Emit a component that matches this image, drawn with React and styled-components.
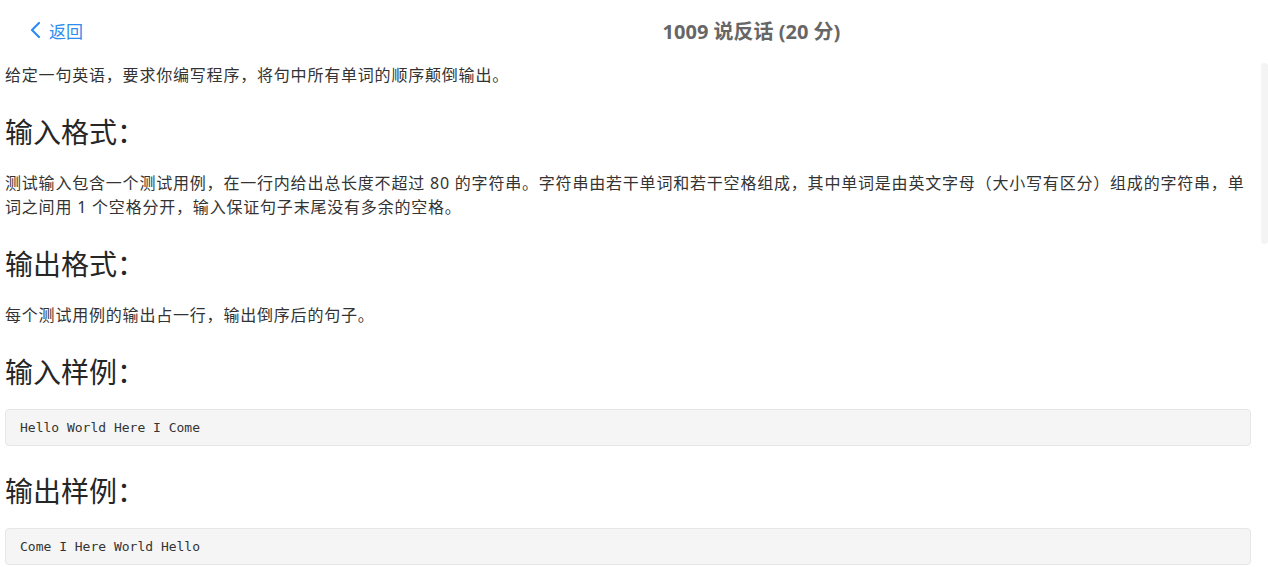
import styled, { createGlobalStyle } from 'styled-components';

const GlobalStyle = createGlobalStyle`
  body {
    margin: 0;
    background: #fff;
    font-family: "Noto Sans", "Noto Sans CJK SC", sans-serif;
    color: #333;
  }
`;

const Page = styled.div`
  width: 1268px;
  height: 579px;
  overflow: hidden;
`;

const Header = styled.header`
  display: flex;
  align-items: center;
  box-sizing: border-box;
  height: 63px;
  padding-bottom: 3px;
`;

const BackLink = styled.a`
  display: flex;
  align-items: center;
  gap: 6px;
  width: 206px;
  padding-left: 29px;
  color: #2d8cf0;
  font-size: 17px;
  font-family: "Noto Sans CJK SC", sans-serif;
  text-decoration: none;
  cursor: pointer;
`;

const Title = styled.h1`
  flex: 1;
  margin: 0;
  text-align: center;
  font-size: 20px;
  font-weight: 700;
  color: #666;
`;

const Content = styled.main`
  position: relative;
  display: flex;
  flex-direction: column;
  padding: 0 17px 0 5px;
`;

const ScrollThumb = styled.div`
  position: absolute;
  top: 0;
  right: 0;
  width: 7px;
  height: 181px;
  border-radius: 4px;
  background: #f4f4f4;
`;

const Para = styled.p`
  margin: ${p => (p.$first ? '0' : '2px 0 0')};
  font-size: 16px;
  line-height: 24px;
  letter-spacing: 0.8px;
  color: #333;
`;

const Heading = styled.h2`
  margin: 26px 0 20px;
  font-size: 28px;
  font-weight: 400;
  line-height: 36px;
  color: #262626;
  font-family: "Noto Sans CJK SC", sans-serif;
`;

const Code = styled.pre`
  margin: 0;
  padding: 8px 14px;
  background: #f5f5f5;
  border: 1px solid #e6e6e6;
  border-radius: 4px;
  font-family: "DejaVu Sans Mono", "Liberation Mono", monospace;
  font-size: 13px;
  line-height: 19px;
  color: #333;
`;

function ChevronLeft() {
  return (
    <svg width="14" height="18" viewBox="0 0 14 18" fill="none">
      <path d="M10 2 L3 9 L10 16" stroke="#2d8cf0" strokeWidth="2.2" strokeLinecap="round" strokeLinejoin="round" />
    </svg>
  );
}

export default function App() {
  return (
    <Page>
      <GlobalStyle />
      <Header>
        <BackLink>
          <ChevronLeft />
          返回
        </BackLink>
        <Title>1009 说反话 (20 分)</Title>
      </Header>
      <Content>
        <ScrollThumb />
        <Para $first>给定一句英语，要求你编写程序，将句中所有单词的顺序颠倒输出。</Para>
        <Heading>输入格式：</Heading>
        <Para>
          测试输入包含一个测试用例，在一行内给出总长度不超过 80 的字符串。字符串由若干单词和若干空格组成，其中单词是由英文字母（大小写有区分）组成的字符串，单词之间用 1 个空格分开，输入保证句子末尾没有多余的空格。
        </Para>
        <Heading>输出格式：</Heading>
        <Para>每个测试用例的输出占一行，输出倒序后的句子。</Para>
        <Heading>输入样例：</Heading>
        <Code>Hello World Here I Come</Code>
        <Heading>输出样例：</Heading>
        <Code>Come I Here World Hello</Code>
      </Content>
    </Page>
  );
}
